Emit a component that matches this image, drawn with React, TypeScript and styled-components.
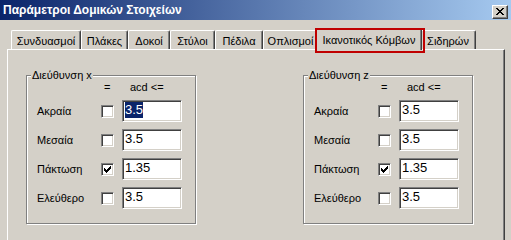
import styled, { createGlobalStyle } from 'styled-components';

const GlobalStyle = createGlobalStyle`
  html, body {
    margin: 0;
    padding: 0;
  }
  body {
    background: #d4d0c8;
    font-family: 'Liberation Sans', Arial, sans-serif;
    font-size: 11px;
    color: #000;
    overflow: hidden;
  }
`;

const tabs = [
  { label: 'Συνδυασμοί', w: 70 },
  { label: 'Πλάκες', w: 47 },
  { label: 'Δοκοί', w: 42 },
  { label: 'Στύλοι', w: 45 },
  { label: 'Πέδιλα', w: 48 },
  { label: 'Οπλισμοί', w: 55 },
  { label: 'Ικανοτικός Κόμβων', w: 102, active: true },
  { label: 'Σιδηρών', w: 56 },
];

interface Row {
  label: string;
  checked: boolean;
  value: string;
  selected?: boolean;
}

const groups: { title: string; rows: Row[] }[] = [
  {
    title: 'Διεύθυνση x',
    rows: [
      { label: 'Ακραία', checked: false, value: '3.5', selected: true },
      { label: 'Μεσαία', checked: false, value: '3.5' },
      { label: 'Πάκτωση', checked: true, value: '1.35' },
      { label: 'Ελεύθερο', checked: false, value: '3.5' },
    ],
  },
  {
    title: 'Διεύθυνση z',
    rows: [
      { label: 'Ακραία', checked: false, value: '3.5' },
      { label: 'Μεσαία', checked: false, value: '3.5' },
      { label: 'Πάκτωση', checked: true, value: '1.35' },
      { label: 'Ελεύθερο', checked: false, value: '3.5' },
    ],
  },
];

export default function App() {
  return (
    <>
      <GlobalStyle />
      <Window>
        <TitleBar>
          <Title>Παράμετροι Δομικών Στοιχείων</Title>
          <CloseButton>
            <svg width="8" height="7" viewBox="0 0 8 7" shapeRendering="crispEdges">
              <path d="M0 0h2v1h1v1h2V1h1V0h2v1H7v1H6v1H5v1h1v1h1v1h1v1H6V6H5V5H3v1H2v1H0V6h1V5h1V4h1V3H2V2H1V1H0z" fill="#000" />
            </svg>
          </CloseButton>
        </TitleBar>
        <Body>
          <TabStrip>
            {tabs.map((t) => (
              <Tab key={t.label} $w={t.w} $active={!!t.active}>
                {t.label}
              </Tab>
            ))}
          </TabStrip>
          <Page>
            {groups.map((g) => (
              <Group key={g.title}>
                <Caption>{g.title}</Caption>
                <span />
                <HeadCell $center>=</HeadCell>
                <HeadCell>acd &lt;=</HeadCell>
                {g.rows.map((r) => (
                  <FieldRow key={r.label} row={r} />
                ))}
              </Group>
            ))}
          </Page>
        </Body>
      </Window>
    </>
  );
}

function FieldRow({ row }: { row: Row }) {
  return (
    <>
      <Label>{row.label}</Label>
      <CheckBox>
        {row.checked && (
          <svg width="7" height="7" viewBox="0 0 7 7" shapeRendering="crispEdges">
            <path d="M6 0h1v3H6v1H5v1H4v1H3v1H2V6H1V5H0V2h1v1h1v1h1V3h1V2h1V1h1z" fill="#000" />
          </svg>
        )}
      </CheckBox>
      <Field>
        <Value $selected={!!row.selected}>{row.value}</Value>
      </Field>
    </>
  );
}

const Window = styled.div`
  width: 511px;
  height: 240px;
  overflow: hidden;
`;

const TitleBar = styled.div`
  height: 20px;
  background: linear-gradient(to right, #0a246a, #a6caf0);
  display: flex;
  align-items: center;
  justify-content: space-between;
  padding: 0 3px 0 3px;
`;

const Title = styled.div`
  color: #fff;
  font-weight: bold;
  font-size: 12px;
`;

const CloseButton = styled.div`
  width: 16px;
  height: 14px;
  box-sizing: border-box;
  margin-top: 3px;
  background: #d4d0c8;
  border: 1px solid;
  border-color: #fff #404040 #404040 #fff;
  box-shadow: inset -1px -1px 0 #808080;
  display: flex;
  align-items: center;
  justify-content: center;
`;

const Body = styled.div`
  padding: 8px 6px 0 7px;
`;

const TabStrip = styled.div`
  display: flex;
  align-items: flex-end;
  height: 21px;
  padding-left: 4px;
`;

const Tab = styled.div<{ $w: number; $active: boolean }>`
  position: relative;
  box-sizing: border-box;
  width: ${(p) => (p.$active ? p.$w + 4 : p.$w)}px;
  height: ${(p) => (p.$active ? 22 : 19)}px;
  margin: ${(p) => (p.$active ? '0 -2px -1px' : '0')};
  padding-top: ${(p) => (p.$active ? 4 : 3)}px;
  line-height: 14px;
  text-align: center;
  white-space: nowrap;
  background: #d4d0c8;
  border-top: 1px solid #fff;
  border-left: 1px solid #fff;
  border-right: 1px solid #404040;
  border-radius: 2px 2px 0 0;
  box-shadow: inset -1px 0 0 #808080;
  z-index: ${(p) => (p.$active ? 2 : 1)};

  ${(p) =>
    p.$active &&
    `
    &::after {
      content: '';
      position: absolute;
      top: -1px;
      left: -2px;
      right: -4px;
      bottom: -3px;
      border: 2px solid #c00000;
    }
  `}
`;

const Page = styled.div`
  height: 220px;
  border-top: 1px solid #fff;
  border-left: 1px solid #fff;
  border-right: 1px solid #404040;
  box-shadow: inset -1px 0 0 #808080;
  display: flex;
  align-items: flex-start;
  gap: 107px;
  padding: 25px 0 0 18px;
`;

const Group = styled.div`
  position: relative;
  box-sizing: border-box;
  width: 170px;
  border: 1px solid #808080;
  box-shadow: 1px 1px 0 #fff, inset 1px 1px 0 #fff;
  padding: 5px 0 14px 10px;
  display: grid;
  grid-template-columns: 64px 21px 60px;
  grid-template-rows: 12px repeat(4, 22px);
  row-gap: 7px;
  align-items: center;
`;

const Caption = styled.div`
  position: absolute;
  top: -7px;
  left: 4px;
  padding: 0 1px;
  line-height: 13px;
  background: #d4d0c8;
`;

const HeadCell = styled.div<{ $center?: boolean }>`
  line-height: 12px;
  padding-left: ${(p) => (p.$center ? 3 : 8)}px;
`;

const Label = styled.div`
  line-height: 13px;
`;

const CheckBox = styled.div`
  width: 13px;
  height: 13px;
  box-sizing: border-box;
  background: #fff;
  border: 1px solid;
  border-color: #808080 #fff #fff #808080;
  box-shadow: inset 1px 1px 0 #404040, inset -1px -1px 0 #d4d0c8;
  display: flex;
  align-items: center;
  justify-content: center;
`;

const Field = styled.div`
  width: 60px;
  height: 22px;
  box-sizing: border-box;
  background: #fff;
  border: 1px solid;
  border-color: #808080 #fff #fff #808080;
  box-shadow: inset 1px 1px 0 #404040, inset -1px -1px 0 #d4d0c8;
  padding: 1px 0 0 2px;
  font-size: 13px;
  line-height: 16px;
`;

const Value = styled.span<{ $selected: boolean }>`
  display: inline-block;
  background: ${(p) => (p.$selected ? '#0a246a' : 'transparent')};
  color: ${(p) => (p.$selected ? '#fff' : '#000')};
`;
